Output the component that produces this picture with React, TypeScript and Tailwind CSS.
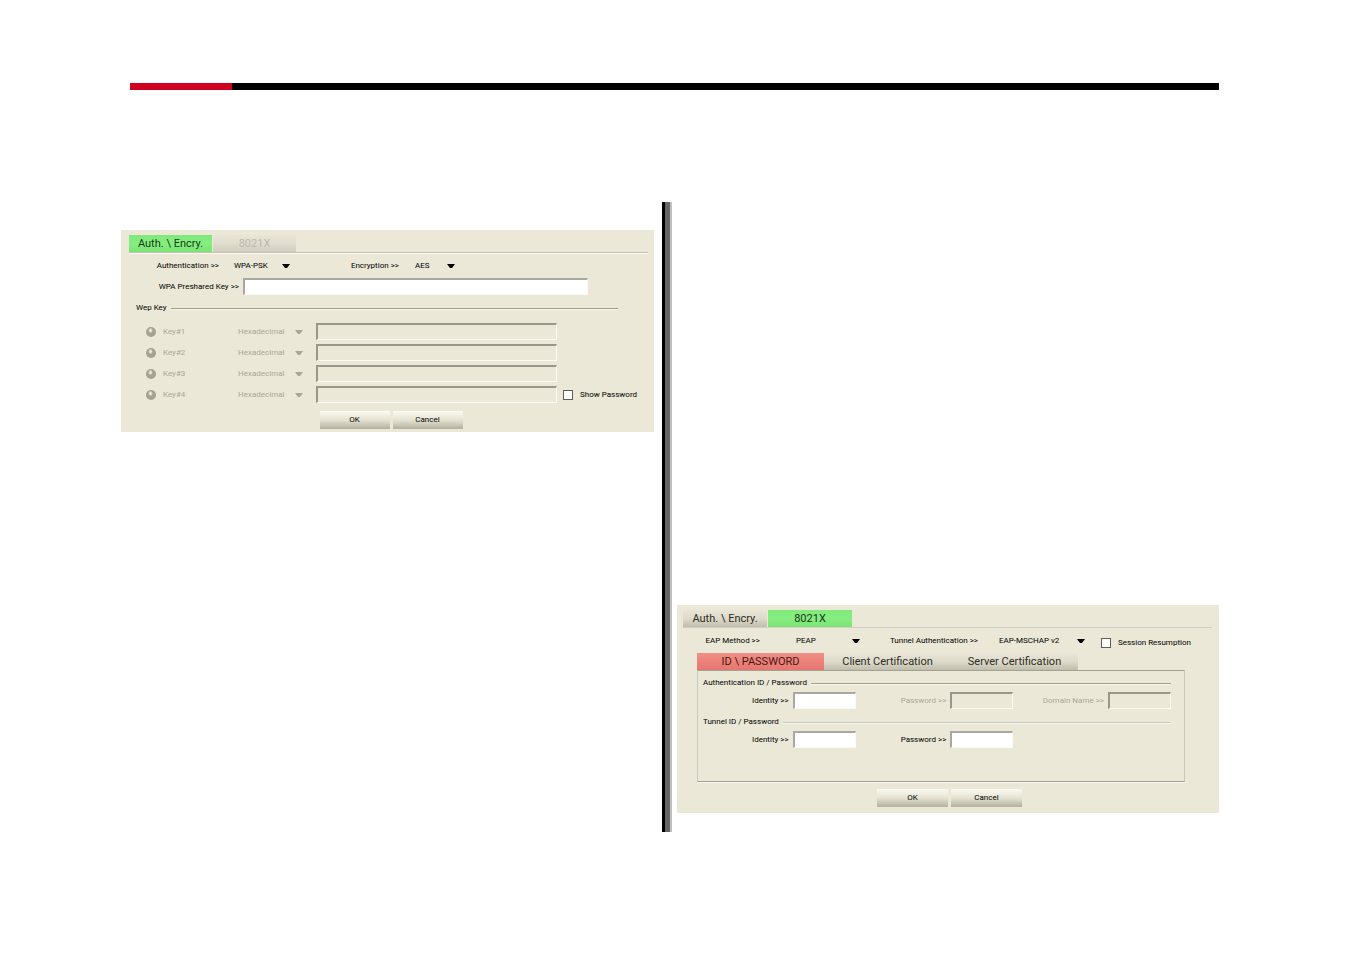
import type { ReactNode } from "react";

const field = "h-[17px] border-t-2 border-l-2 border-r border-b px-1 text-[8px] leading-[10px] outline-none border-r-[#fbfaf4] border-b-[#fbfaf4]";
const fieldOn = "bg-white border-t-[#a9a7a0] border-l-[#a9a7a0]";
const fieldOff = "bg-[#ebe8d8] border-t-[#99968a] border-l-[#99968a]";

function TextField({ id, className, disabled = false, label }: { id: string; className: string; disabled?: boolean; label?: string }) {
  return (
    <input
      id={id}
      type="text"
      aria-label={label}
      disabled={disabled}
      className={`${field} ${disabled ? fieldOff : fieldOn} ${className}`}
    />
  );
}

function Dropdown({ id, value, className, disabled = false, label }: { id: string; value: string; className: string; disabled?: boolean; label?: string }) {
  return (
    <span className={`relative flex items-center ${className}`}>
      <select
        id={id}
        aria-label={label}
        disabled={disabled}
        className={`h-4 w-full appearance-none bg-transparent pr-3 text-[8px] leading-[10px] opacity-100 outline-none ${disabled ? "text-[#aaa797]" : "text-black"}`}
      >
        <option>{value}</option>
      </select>
      <svg viewBox="0 0 8 4" className={`pointer-events-none absolute right-0 h-1 w-2 ${disabled ? "fill-[#a9a696]" : "fill-black"}`}>
        <path d="M0 0H8L5 4H3Z" />
      </svg>
    </span>
  );
}

function Tab({ children, className }: { children: ReactNode; className: string }) {
  return (
    <button type="button" className={`h-[17px] text-center text-[11px] leading-4 whitespace-nowrap ${className}`}>
      {children}
    </button>
  );
}

const tabGreen = "bg-linear-to-b from-[#7fe97a] via-[#86ee80] to-[#7be475] text-[#173a15]";
const tabRed = "bg-linear-to-b from-[#ee9088] via-[#ec8279] to-[#e5776f] text-[#4a1814]";
const tabGray = "bg-linear-to-b from-[#e9e6d7] via-[#dedbcb] to-[#c0bdac] text-[#2c2b25]";
const tabDisabled = "bg-linear-to-b from-[#e9e6d7] via-[#e0ddce] to-[#d0cdbe] text-[#bbb8a9]";

function PushButton({ children, className }: { children: ReactNode; className: string }) {
  return (
    <button
      type="button"
      className={`h-[18px] bg-linear-to-b from-[#fbfaf1] via-[#e6e3d3] to-[#b3b09f] text-center text-[8px] leading-[10px] ${className}`}
    >
      {children}
    </button>
  );
}

function GroupTitle({ children, line }: { children: ReactNode; line: string }) {
  return (
    <div className="flex items-center gap-1">
      <h2 className="leading-[10px]">{children}</h2>
      <hr className={`mt-[2px] h-[2px] flex-1 border-t border-b border-b-[#f8f7ee] ${line}`} />
    </div>
  );
}

function CheckOption({ id, children }: { id: string; children: ReactNode }) {
  return (
    <div className="flex items-center gap-[7px]">
      <input id={id} type="checkbox" className="size-[10px] shrink-0 appearance-none border border-[#5e5c55] bg-white" />
      <label htmlFor={id}>{children}</label>
    </div>
  );
}

function WepRow({ n, children }: { n: number; children?: ReactNode }) {
  return (
    <div className="flex h-[17px] items-center text-[#aaa797]">
      <div className="flex w-[92px] items-center gap-[7px]">
        <input
          id={`key${n}`}
          name="wep"
          type="radio"
          disabled
          className="size-[10px] appearance-none rounded-full bg-[#a5a293] bg-[radial-gradient(ellipse_at_45%_35%,#efecdf_0_10%,#a5a293_30%)]"
        />
        <label htmlFor={`key${n}`}>Key#{n}</label>
      </div>
      <Dropdown id={`format${n}`} label={`Key ${n} format`} value="Hexadecimal" disabled className="w-[65px]" />
      <TextField id={`value${n}`} label={`Key ${n} value`} disabled className="ml-[13px] min-w-0 flex-1" />
      <div className="w-[97px] pl-[6px] text-black">{children}</div>
    </div>
  );
}

function LabeledField({ id, label, disabled = false }: { id: string; label: string; disabled?: boolean }) {
  return (
    <div className="flex items-center justify-end gap-1">
      <label htmlFor={id} className={disabled ? "text-[#aaa797]" : "text-black"}>{label} &gt;&gt;</label>
      <TextField id={id} disabled={disabled} className="w-[63px]" />
    </div>
  );
}

function EncryptionPanel() {
  return (
    <section className="mt-7 h-fit bg-[#ebe8d8] pt-[5px] pb-[3px]">
      <nav className="mr-[6px] ml-2 flex gap-px border-b border-[#c4c1b2] shadow-[0_1px_0_#fbfaf4]">
        <Tab className={`w-[83px] ${tabGreen}`}>Auth. \ Encry.</Tab>
        <Tab className={`w-[83px] ${tabDisabled}`}>8021X</Tab>
      </nav>
      <div className="mt-1 flex h-[18px] items-center">
        <label htmlFor="auth" className="w-[98px] text-right">Authentication &gt;&gt;</label>
        <Dropdown id="auth" value="WPA-PSK" className="ml-[15px] w-14" />
        <label htmlFor="encryption" className="ml-[59px] w-[50px] text-right">Encryption &gt;&gt;</label>
        <Dropdown id="encryption" value="AES" className="ml-4 w-10" />
      </div>
      <div className="mt-[3px] mr-[66px] flex items-center gap-1">
        <label htmlFor="psk" className="w-[118px] text-right">WPA Preshared Key &gt;&gt;</label>
        <TextField id="psk" className="min-w-0 flex-1" />
      </div>
      <div className="mt-2 mr-9 ml-[15px]">
        <GroupTitle line="border-t-[#9f9c8f]">Wep Key</GroupTitle>
      </div>
      <div className="mt-[10px] ml-[25px] flex flex-col gap-1">
        <WepRow n={1} />
        <WepRow n={2} />
        <WepRow n={3} />
        <WepRow n={4}>
          <CheckOption id="show">Show Password</CheckOption>
        </WepRow>
      </div>
      <div className="mt-2 flex justify-center gap-[3px] pl-[7px]">
        <PushButton className="w-[70px]">OK</PushButton>
        <PushButton className="w-[70px]">Cancel</PushButton>
      </div>
    </section>
  );
}

function EapPanel() {
  return (
    <section className="mb-[19px] self-end bg-[#ebe8d8] pt-[5px] pb-[6px]">
      <nav className="mr-[7px] ml-[6px] flex gap-px border-b border-[#d0cec6]">
        <Tab className={`w-[84px] ${tabGray}`}>Auth. \ Encry.</Tab>
        <Tab className={`w-[84px] ${tabGreen}`}>8021X</Tab>
      </nav>
      <div className="mt-1 flex h-[18px] items-center">
        <label htmlFor="method" className="w-[83px] text-right">EAP Method &gt;&gt;</label>
        <Dropdown id="method" value="PEAP" className="ml-9 w-16" />
        <label htmlFor="tunnel" className="ml-7 w-[90px] text-right">Tunnel Authentication &gt;&gt;</label>
        <Dropdown id="tunnel" value="EAP-MSCHAP v2" className="ml-[21px] w-[86px]" />
        <div className="mt-1 ml-4">
          <CheckOption id="resume">Session Resumption</CheckOption>
        </div>
      </div>
      <div className="mt-[3px] mr-[34px] ml-5">
        <nav className="flex">
          <Tab className={`w-[127px] ${tabRed}`}>ID \ PASSWORD</Tab>
          <Tab className={`w-[127px] ${tabGray}`}>Client Certification</Tab>
          <Tab className={`w-[127px] ${tabGray}`}>Server Certification</Tab>
        </nav>
        <div className="h-28 border border-[#c9c7bf] border-t-[#a3a092] border-b-[#a3a092] pt-[7px] pr-[13px] shadow-[0_1px_0_#fbfaf4]">
          <div className="pl-[5px]">
            <GroupTitle line="border-t-[#a3a092]">Authentication ID / Password</GroupTitle>
          </div>
          <div className="mt-1 grid grid-cols-3">
            <LabeledField id="auth-id" label="Identity" />
            <LabeledField id="auth-password" label="Password" disabled />
            <LabeledField id="domain" label="Domain Name" disabled />
          </div>
          <div className="mt-2 pl-[5px]">
            <GroupTitle line="border-t-[#c9c7bf]">Tunnel ID / Password</GroupTitle>
          </div>
          <div className="mt-1 grid grid-cols-3">
            <LabeledField id="tunnel-id" label="Identity" />
            <LabeledField id="tunnel-password" label="Password" />
          </div>
        </div>
      </div>
      <div className="mt-[7px] flex justify-center gap-[3px] pl-[3px]">
        <PushButton className="w-[71px]">OK</PushButton>
        <PushButton className="w-[71px]">Cancel</PushButton>
      </div>
    </section>
  );
}

export default function App() {
  return (
    <div className="min-h-screen bg-white pt-[83px] pr-[131px] pb-[122px] pl-[121px] font-[Roboto,sans-serif] text-[8px] leading-[10px] whitespace-nowrap text-black">
      <header className="ml-[9px] flex h-[7px] bg-black">
        <div className="w-[102px] bg-[#d00020]" />
      </header>
      <main className="mt-28 grid min-h-[630px] grid-cols-[533fr_auto_542fr]">
        <EncryptionPanel />
        <div className="mr-[5px] ml-2 flex">
          <div className="w-[3px] bg-black" />
          <div className="w-[5px] bg-[#656565]" />
          <div className="w-[2px] bg-[#c0c0c0]" />
        </div>
        <EapPanel />
      </main>
    </div>
  );
}
